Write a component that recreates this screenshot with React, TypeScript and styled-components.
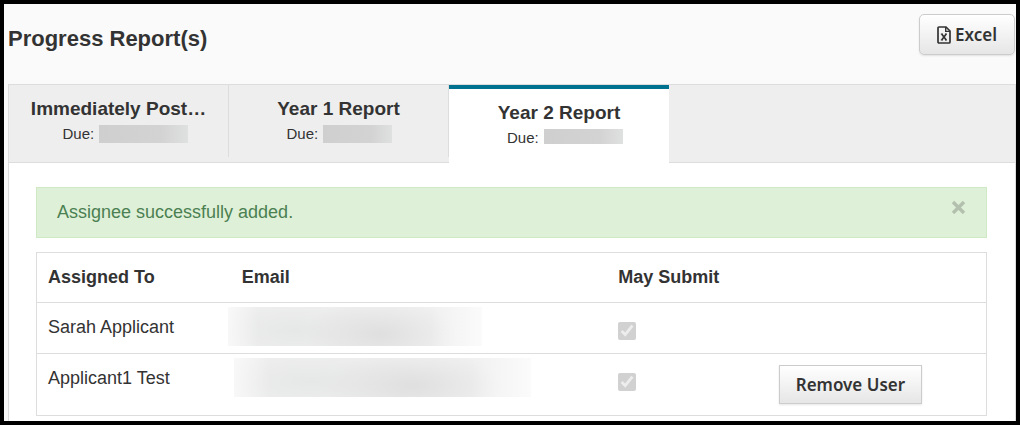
import React from "react";
import styled, { createGlobalStyle } from "styled-components";

const GlobalStyle = createGlobalStyle`
  *, *::before, *::after { box-sizing: border-box; }
  body {
    margin: 0;
    background: #fafafa;
    color: #333;
    font-family: "Liberation Sans", Arial, sans-serif;
  }
`;

const Frame = styled.main`
  display: flex;
  flex-direction: column;
  min-height: 100vh;
  border: 4px solid #000;
  background: #fafafa;
`;

const Header = styled.header`
  display: flex;
  align-items: flex-start;
  justify-content: space-between;
  height: 80px;
  padding: 10px 1px 0 4px;
`;

const Title = styled.h1`
  margin: 12px 0 0;
  font-size: 22px;
  line-height: 26px;
  font-weight: 700;
`;

const Button = styled.button<{ $variant: "rounded" | "square" }>`
  display: inline-flex;
  align-items: center;
  justify-content: center;
  gap: 4px;
  height: ${(p) => (p.$variant === "rounded" ? 41 : 39)}px;
  padding: 0 ${(p) => (p.$variant === "rounded" ? 17 : 16)}px;
  border: 1px solid #ccc;
  border-radius: ${(p) => (p.$variant === "rounded" ? 5 : 0)}px;
  background: linear-gradient(#fff, #e6e6e6);
  box-shadow: 0 1px 2px rgba(0, 0, 0, 0.1);
  color: #333;
  font-family: "Noto Sans", "Open Sans", sans-serif;
  font-size: 17px;
  line-height: 20px;
  font-weight: 600;
  white-space: nowrap;
`;

const Panel = styled.section`
  flex: 1;
  margin: 0 0 0 4px;
  border: 1px solid #ddd;
  border-bottom: 0;
  background: #fff;
`;

const TabBar = styled.div`
  display: flex;
  height: 78px;
  background: #eee;
  box-shadow: inset 0 -1px #ddd;
`;

const Tab = styled.button<{ $active?: boolean }>`
  display: flex;
  flex-direction: column;
  align-items: center;
  width: 220px;
  height: ${(p) => (p.$active ? 78 : 72)}px;
  padding: 12px 12px 0;
  border: 0;
  border-top: ${(p) => (p.$active ? "4px solid #00728f" : "0")};
  border-right: ${(p) => (p.$active ? "0" : "1px solid #ddd")};
  background: ${(p) => (p.$active ? "#fff" : "transparent")};
  color: #333;
  font-family: inherit;
`;

const TabName = styled.span`
  font-size: 19px;
  line-height: 24px;
  font-weight: 700;
  white-space: nowrap;
`;

const TabDue = styled.span<{ $width: number }>`
  display: flex;
  gap: 5px;
  width: ${(p) => p.$width}px;
  margin-top: 4px;
  font-size: 15px;
  line-height: 18px;
`;

const DateMask = styled.span<{ $width: number; $height: number }>`
  flex: none;
  width: ${(p) => p.$width}px;
  height: ${(p) => p.$height}px;
  background: linear-gradient(90deg, #cfcfcf, #d3d3d3 70%, #dfe0e0);
`;

const Content = styled.div`
  padding: 24px 28px 5px 27px;
`;

const Alert = styled.div`
  display: flex;
  align-items: flex-start;
  justify-content: space-between;
  height: 51px;
  padding: 12px 20px;
  border: 1px solid #cfe9c5;
  background: #dff0d8;
  color: #4b8052;
  font-size: 18px;
  line-height: 24px;
`;

const CloseButton = styled.button`
  display: flex;
  padding: 0;
  border: 0;
  background: none;
  color: #b2c0ad;
`;

const Table = styled.table`
  width: 100%;
  margin-top: 14px;
  border: 1px solid #ddd;
  border-collapse: separate;
  border-spacing: 0;
  table-layout: fixed;
  font-size: 18px;
  line-height: 24px;
`;

const HeadCell = styled.th<{ $width?: string; $inset?: number }>`
  width: ${(p) => p.$width ?? "auto"};
  height: 49px;
  padding: 0 0 2px ${(p) => p.$inset ?? 11}px;
  font-weight: 700;
  text-align: left;
`;

const Cell = styled.td<{ $height: number }>`
  height: ${(p) => p.$height}px;
  padding: 12px 11px 0;
  border-top: 1px solid #ddd;
  vertical-align: top;
`;

const MaskCell = styled(Cell)<{ $inset: number }>`
  padding: 4px 0 0 ${(p) => p.$inset}px;
`;

const ActionCell = styled(Cell)`
  padding-top: 11px;
`;

const EmailMask = styled.div<{ $width: number }>`
  width: ${(p) => p.$width}px;
  height: 39px;
  background:
    linear-gradient(90deg, rgba(255, 255, 255, 0.6), transparent 12%, transparent 80%, #fbfbfb 100%),
    radial-gradient(ellipse 30% 90% at 60% 70%, #dfdfdf, transparent),
    radial-gradient(ellipse 40% 90% at 26% 60%, #e6e7e7, transparent),
    #f0f0f0;
`;

const SubmitCheck = styled.input`
  display: block;
  width: 18px;
  height: 18px;
  margin: 7px 0 0;
`;

const ExcelIcon = () => (
  <svg width="14" height="18" viewBox="0 0 14 18" fill="none" stroke="#333" aria-hidden="true">
    <path d="M2 1H9L13 5V16Q13 17 12 17H2Q1 17 1 16V2Q1 1 2 1Z" strokeWidth="1.7" />
    <path d="M8.7 1V5.4H13" strokeWidth="1.4" />
    <path d="M4.7 8L9.2 14M9.2 8L4.7 14" strokeWidth="1.7" />
    <path d="M3.8 8H5.8M8 8H10M3.8 14H5.8M8 14H10" strokeWidth="1" />
  </svg>
);

const CloseIcon = () => (
  <svg width="15" height="14" viewBox="0 0 15 14" stroke="currentColor" strokeWidth="3.4" aria-hidden="true">
    <path d="M2 2L13 13M13 2L2 13" />
  </svg>
);

const tabs = [
  { name: "Immediately Post…", dueWidth: 112, mask: 89, maskHeight: 18 },
  { name: "Year 1 Report", dueWidth: 104, mask: 69, maskHeight: 18 },
  { name: "Year 2 Report", dueWidth: 104, mask: 79, maskHeight: 15, active: true },
];

const assignees = [
  { name: "Sarah Applicant", inset: 0, mask: 254, height: 51, removable: false },
  { name: "Applicant1 Test", inset: 6, mask: 297, height: 62, removable: true },
];

type Assignee = (typeof assignees)[number];

const AssigneeRow = ({ person }: { person: Assignee }) => (
  <tr>
    <Cell $height={person.height}>{person.name}</Cell>
    <MaskCell $height={person.height} $inset={person.inset}>
      <EmailMask $width={person.mask} />
    </MaskCell>
    <Cell $height={person.height}>
      <SubmitCheck type="checkbox" aria-label={`${person.name} may submit`} defaultChecked disabled />
    </Cell>
    <ActionCell $height={person.height}>
      {person.removable && (
        <Button type="button" $variant="square">
          Remove User
        </Button>
      )}
    </ActionCell>
  </tr>
);

export default function App() {
  return (
    <>
      <GlobalStyle />
      <Frame>
        <Header>
          <Title>Progress Report(s)</Title>
          <Button type="button" $variant="rounded">
            <ExcelIcon />
            Excel
          </Button>
        </Header>
        <Panel>
          <TabBar role="tablist">
            {tabs.map((tab) => (
              <Tab key={tab.name} type="button" role="tab" aria-selected={!!tab.active} $active={tab.active}>
                <TabName>{tab.name}</TabName>
                <TabDue $width={tab.dueWidth}>
                  Due: <DateMask $width={tab.mask} $height={tab.maskHeight} />
                </TabDue>
              </Tab>
            ))}
          </TabBar>
          <Content>
            <Alert role="status">
              Assignee successfully added.
              <CloseButton type="button" aria-label="Close">
                <CloseIcon />
              </CloseButton>
            </Alert>
            <Table>
              <thead>
                <tr>
                  <HeadCell $width="20.1%">Assigned To</HeadCell>
                  <HeadCell $width="40%" $inset={14}>Email</HeadCell>
                  <HeadCell $width="16.9%">May Submit</HeadCell>
                  <HeadCell />
                </tr>
              </thead>
              <tbody>
                {assignees.map((person) => (
                  <AssigneeRow key={person.name} person={person} />
                ))}
              </tbody>
            </Table>
          </Content>
        </Panel>
      </Frame>
    </>
  );
}
